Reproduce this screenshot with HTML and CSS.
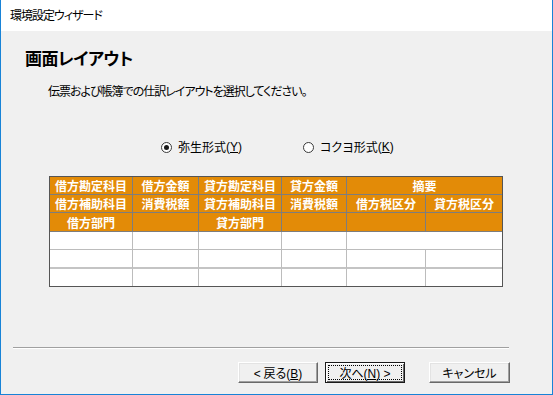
FILE: index.html
```html
<!DOCTYPE html>
<html>
<head>
<meta charset="UTF-8">
<title>環境設定ウィザード</title>
<link rel="stylesheet" href="styles.css">
</head>
<body>
<div class="window">
  <div class="titlebar">環境設定ウィザード</div>
  <div class="page">
    <h1 class="heading">画面レイアウト</h1>
    <p class="intro">伝票および帳簿での仕訳レイアウトを選択してください。</p>

    <div class="choices">
      <label class="choice"><span class="radio on"></span>弥生形式<span class="key">(<u>Y</u>)</span></label>
      <label class="choice"><span class="radio"></span>コクヨ形式<span class="key">(<u>K</u>)</span></label>
    </div>

    <table class="layout">
      <colgroup>
        <col style="width:83px"><col style="width:66px"><col style="width:83px">
        <col style="width:65px"><col style="width:79px"><col style="width:76px">
      </colgroup>
      <thead>
        <tr>
          <th>借方勘定科目</th><th>借方金額</th><th>貸方勘定科目</th><th>貸方金額</th><th colspan="2" class="last">摘要</th>
        </tr>
        <tr>
          <th>借方補助科目</th><th>消費税額</th><th>貸方補助科目</th><th>消費税額</th><th>借方税区分</th><th class="last">貸方税区分</th>
        </tr>
        <tr class="r3">
          <th>借方部門</th><th></th><th>貸方部門</th><th></th><th></th><th class="last"></th>
        </tr>
      </thead>
      <tbody>
        <tr>
          <td></td><td></td><td></td><td></td><td colspan="2" class="last"></td>
        </tr>
        <tr class="split">
          <td></td><td></td><td></td><td></td><td></td><td class="last"></td>
        </tr>
        <tr class="end">
          <td></td><td></td><td></td><td></td><td></td><td class="last"></td>
        </tr>
      </tbody>
    </table>

    <div class="rule"></div>

    <div class="buttons">
      <button class="btn"><span class="key">&lt;</span> 戻る<span class="key">(<u>B</u>)</span></button>
      <button class="btn default">次へ<span class="key">(<u>N</u>) &gt;</span></button>
      <button class="btn cancel">キャンセル</button>
    </div>
  </div>
</div>
</body>
</html>
```

FILE: styles.css
```css
html, body { margin: 0px; padding: 0px; background-color: #f0f0f0;
  font-family: "Noto Sans CJK JP", "Noto Sans", sans-serif;
  font-size: 12px;
  color: #000;
}

.window {
  box-sizing: border-box;
  width: 553px;
  height: 395px;
  display: flex;
  flex-direction: column;
  border: 1px solid #1883d7;
  border-top: none;
  background: #f0f0f0;
}

.titlebar {
  height: 31px;
  line-height: 30px;
  padding-left: 9px;
  background: #fff;
  letter-spacing: -1px;
  font-feature-settings: "palt";
}

.page {
  flex: 1;
  display: flex;
  flex-direction: column;
}

.heading {
  margin: 17px 0 0 24px;
  font-size: 17px;
  line-height: 20px;
  font-weight: bold;
  letter-spacing: -0.5px;
  font-feature-settings: "palt";
}

.intro {
  margin: 15px 0 0 47px;
  line-height: 16px;
  letter-spacing: -1px;
  font-feature-settings: "palt";
}

.key {
  font-family: "Liberation Sans", sans-serif;
  letter-spacing: 0;
}

.choices {
  display: flex;
  gap: 61px;
  margin: 40px 0 0 160px;
  line-height: 16px;
  font-feature-settings: "palt";
}

.choice {
  display: flex;
  align-items: center;
}

.radio {
  box-sizing: border-box;
  width: 11px;
  height: 11px;
  margin-right: 6px;
  border: 1px solid #3a3a3a;
  border-radius: 50%;
  background: #fff;
  display: flex;
  align-items: center;
  justify-content: center;
}

.radio.on::after {
  content: "";
  width: 5px;
  height: 5px;
  border-radius: 50%;
  background: #1a1a1a;
}

.layout {
  box-sizing: border-box;
  width: 454px;
  margin: 21px 0 0 48px;
  table-layout: fixed;
  border-collapse: separate;
  border-spacing: 0;
  border: 1px solid #555;
}

.layout th, .layout td {
  padding: 0;
  height: 17px;
  line-height: 17px;
  text-align: center;
  white-space: nowrap;
  overflow: hidden;
}

.layout th {
  background: #e38b07;
  color: #fff;
  font-weight: bold;
  border-right: 1px solid #7d7d7d;
  border-bottom: 1px solid #7d7d7d;
}

.layout .r3 th { height: 18px; }

.layout td {
  background: #fff;
  border-right: 1px solid #bcbcbc;
  border-bottom: 1px solid #bcbcbc;
}

.layout .split td { border-bottom: 2px solid #c4c4c4; }
.layout .end td { border-bottom: none; }
.layout .last { border-right: none; }

.rule {
  margin: 60px 43px 0 12px;
  height: 0;
  border-top: 1px solid #a0a0a0;
  border-bottom: 1px solid #fff;
}

.buttons {
  display: flex;
  justify-content: flex-end;
  gap: 7px;
  margin: 13px 42px 0 0;
}

.btn {
  box-sizing: border-box;
  width: 80px;
  height: 21px;
  padding: 0;
  font-family: inherit;
  font-size: 12px;
  font-feature-settings: "palt";
  color: #000;
  background: #f0f0f0;
  border: 1px solid;
  border-color: #fff #696969 #696969 #fff;
  box-shadow: inset -1px -1px 0 #a0a0a0, inset 1px 1px 0 #e3e3e3;
}

.btn.default {
  border: 1px solid #1a1a1a;
  box-shadow: inset 1px 1px 0 #fff, inset -1px -1px 0 #696969;
  outline: 1px dotted #000;
  outline-offset: -4px;
}

.btn.cancel { margin-left: 17px; width: 81px; }
```
